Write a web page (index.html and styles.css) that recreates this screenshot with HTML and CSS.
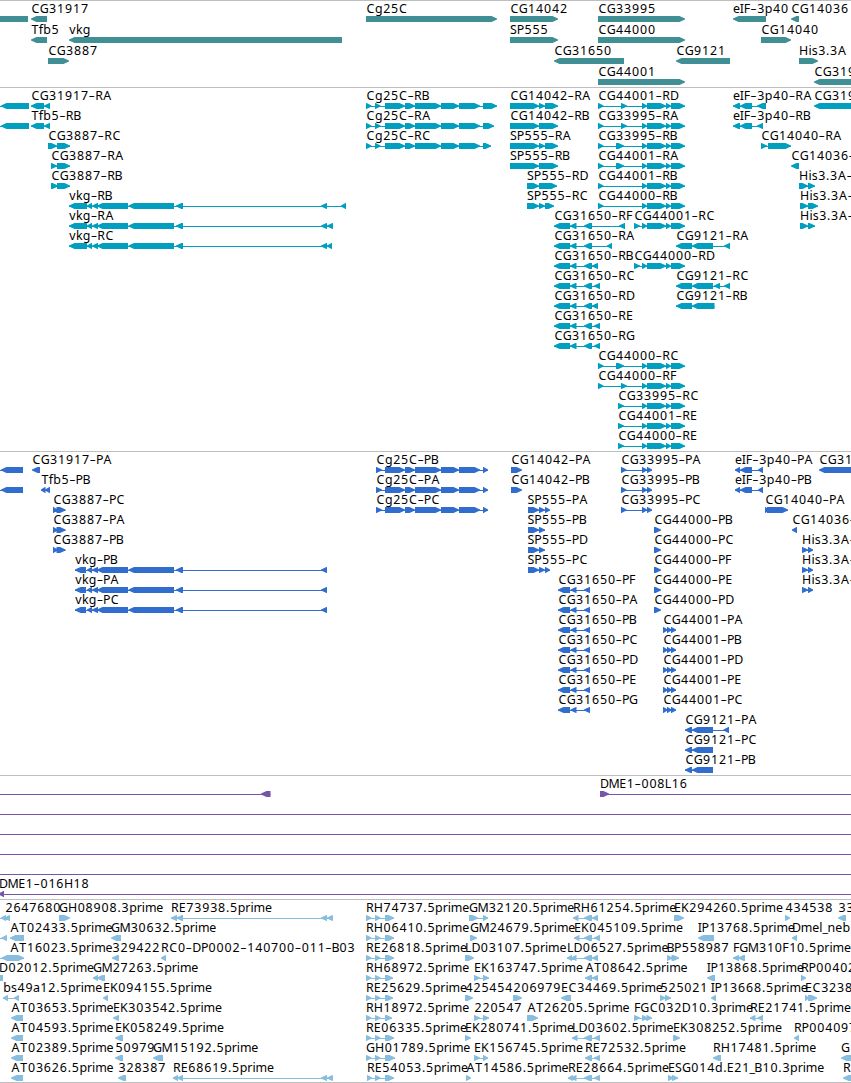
FILE: index.html
```html
<!DOCTYPE html>
<html lang="en">
<head>
<meta charset="utf-8">
<title>Genome tracks</title>
<link rel="stylesheet" href="styles.css">
</head>
<body>
<main class="browser" id="browser"></main>
<script src="tracks.js"></script>
</body>
</html>
```
FILE: styles.css
```css
* {
  box-sizing: border-box;
}

body {
  margin: 0;
  background: #fff;
  overflow: hidden;
}

.browser {
  display: flex;
  flex-direction: column;
  width: 851px;
  overflow: hidden;
  border-bottom: 1px solid #bebebe;
}

.track {
  display: flex;
  flex-direction: column;
  border-top: 1px solid #bebebe;
  padding-bottom: 3px;
}

.row {
  display: block;
  width: 851px;
  height: 20px;
  overflow: visible;
}

.genes .row {
  height: 21px;
}

.genes,
.ests {
  padding-bottom: 2px;
}

.genes { fill: #3f8f95; }
.transcripts { fill: #009fc0; }
.proteins { fill: #316dcd; }
.bacs { fill: #7457a8; }
.ests { fill: #87bddf; }

.label {
  font-family: "Noto Sans", "Open Sans", sans-serif;
  font-size: 12.4px;
  text-anchor: middle;
  fill: #000;
}

.dash {
  font-family: "Open Sans", "Noto Sans", sans-serif;
  font-size: 20px;
  font-weight: 300;
}
```
FILE: tracks.js
```js
// Each feature reads "label|x|direction|start,end start,end ...".
const cg = '375,380.5 385,405 405,415 415,441 441,459 459,480';
const cgP = '376,382 385,405 405,415 415,441 441,459 459,480 483,488';
const tail = '642,647 647,666 666,671 671,685';
const vk = '87,92 92,98 97,128 128.5,174 176,183';
const c3 = '554,570 570,576.5 584,592';
const c3P = '558,570 570.5,576.5 584,590';
const rh = '366,371.5 375,380.5 385,394';

const tracks = [
  { name: 'genes', rows: [
    '||<|-10,28;CG31917|31|<|31,47;Cg25C|366|>|366,497;CG14042|510|>|510,558;CG33995|598|>|598,685;eIF-3p40|733|<|733,766;CG14036|791|<|791,799',
    'Tfb5|31|<|31,47;vkg|69|<|69,342;SP555|510|>|510,558;CG44000|598|>|598,685;CG14040|761|>|761,791',
    'CG3887|48|>|48,69;CG31650|554|<|554,624;CG9121|676|<|676,730;His3.3A|799|>|799,818',
    'CG44001|598|>|598,685;CG319|814|<|814,880'
  ] },
  { name: 'transcripts', rows: [
    `||<|-20,-10 1,29;CG31917-RA|31|<|31,44 44,50;Cg25C-RB|366|>|366,371.5 ${cg} 483,497;CG14042-RA|510|>|510,539 539,545 545,558;CG44001-RD|598|>|598,603.5 621,627 ${tail};eIF-3p40-RA|733|<|733,740 740,752 757,766;CG319|814|<|814,880`,
    `||<|-20,-10 1,29;Tfb5-RB|31|<|31,44 44,50;Cg25C-RA|366|>|366,371.5 ${cg} 483,494;CG14042-RB|510|>|510,539 539,558;CG33995-RA|598|>|598,603.5 621,627 ${tail};eIF-3p40-RB|733|<|733,740 740,752 757,763`,
    `CG3887-RC|48|>|48,57 57,70;Cg25C-RC|366|>|366,371.5 ${cg} 483,491;SP555-RA|510|>|510,539 539,545 545,558;CG33995-RB|598|>|598,603.5 616,624 ${tail};CG14040-RA|761|>|761,767 768,791`,
    `CG3887-RA|51|>|51,57 57,70;SP555-RB|510|>|510,539 539,558;CG44001-RA|598|>|598,603.5 616,624 ${tail};CG14036-|791|<|791,799`,
    `CG3887-RB|51|>|51,55 52,58 57,70;SP555-RD|527|>|527,539 539,557;CG44001-RB|598|>|598,603.5 ${tail};His3.3A-|799|>|799,808 808,815`,
    `vkg-RB|69|<|69,87 ${vk} 321,327 341,346;SP555-RC|527|>|527,539 539,545 545,554;CG44000-RB|598|>|598,603.5 ${tail};His3.3A-|800|>|800,808 808,818`,
    `vkg-RA|69|<|69,87 ${vk} 321,327 327,333;CG31650-RF|554|<|${c3} 619,625;CG44001-RC|634|>|634,640 ${tail};His3.3A-|800|>|800,808 808,815`,
    `vkg-RC|69|<|69,87 ${vk} 321,327 327,332;CG31650-RA|554|<|${c3} 607,612;CG9121-RA|676|<|676,692 692,713 724,730`,
    `CG31650-RB|554|<|${c3} 592,598;CG44000-RD|634|>|634,640 ${tail}`,
    `CG31650-RC|554|<|${c3} 594,600;CG9121-RC|676|<|676,692 692,713 714,720 724,730`,
    `CG31650-RD|554|<|${c3} 592,598;CG9121-RB|676|<|676,692 692,714.5`,
    `CG31650-RE|554|<|${c3} 594,600`,
    `CG31650-RG|554|<|${c3} 594,600`,
    `CG44000-RC|598|>|598,603.5 616,624 ${tail}`,
    `CG44000-RF|598|>|598,603.5 621,627 ${tail}`,
    `CG33995-RC|618|>|618,624 ${tail}`,
    `CG44001-RE|618|>|618,624 ${tail}`,
    `CG44000-RE|618|>|618,624 ${tail}`
  ] },
  { name: 'proteins', rows: [
    `||<|-20,-10 1,23;CG31917-PA|32|<|32,40;Cg25C-PB|376|>|${cgP};CG14042-PA|511|>|511,522;CG33995-PA|621|>|621,626.5 642,647 647,652;eIF-3p40-PA|735|<|735,740 740,752 758,763;CG31|819|<|819,880`,
    `||<|-20,-10 1,23;Tfb5-PB|41|<|41,45.5 45,50;Cg25C-PA|376|>|${cgP};CG14042-PB|511|>|511,522;CG33995-PB|621|>|621,626.5 642,647 647,652;eIF-3p40-PB|735|<|735,740 740,752 758,763`,
    `CG3887-PC|53|>|53,57.5 56.5,65.5;Cg25C-PC|376|>|${cgP};SP555-PA|527.5|>|528,539 539,545 545,550;CG33995-PC|621|>|621,626.5 642,647 647,652;CG14040-PA|765|>|765,769 767,788`,
    `CG3887-PA|53|>|53,57.5 56.5,65.5;SP555-PB|527.5|>|528,539 539,545;CG44000-PB|654|>|654,661;CG14036-|792|<|792,797`,
    `CG3887-PB|53|>|53,57.5 56.5,65.5;SP555-PD|527.5|>|528,539 539,545;CG44000-PC|654|>|654,661;His3.3A-|802|>|802,808 808,813`,
    `vkg-PB|75|<|75,86 ${vk} 321,327;SP555-PC|527.5|>|528,539 539,545 545,550;CG44000-PF|654|>|654,661;His3.3A-|802|>|802,808 808,813`,
    `vkg-PA|75|<|75,86 ${vk} 321,327;CG31650-PF|558|<|${c3P};CG44000-PE|654|>|654,661;His3.3A-|802|>|802,808 808,813`,
    `vkg-PC|75|<|75,86 ${vk} 321,327;CG31650-PA|558|<|${c3P};CG44000-PD|654|>|654,661`,
    `CG31650-PB|558|<|${c3P};CG44001-PA|663|>|663,667.5 667,671.5 671,676`,
    `CG31650-PC|558|<|${c3P};CG44001-PB|663|>|663,667.5 667,671.5 671,676`,
    `CG31650-PD|558|<|${c3P};CG44001-PD|663|>|663,667.5 667,671.5 671,676`,
    `CG31650-PE|558|<|${c3P};CG44001-PE|663|>|663,667.5 667,671.5 671,676`,
    `CG31650-PG|558|<|${c3P};CG44001-PC|663|>|663,667.5 667,671.5 671,676`,
    'CG9121-PA|685|<|685,692 692,713 723.5,729',
    'CG9121-PC|685|<|685,692 692,713',
    'CG9121-PB|685|<|685,692 692,713'
  ] },
  { name: 'bacs', rows: [
    '||<|-20,-10 261,270.5;DME1-008L16|600|>|600,609 870,880',
    '||-|-10,870',
    '||-|-10,870',
    '||-|-10,870',
    '||-|-10,870',
    'DME1-016H18|-1|<|-1.5,4 870,880'
  ] },
  { name: 'ests', rows: [
    `2647680|5|<|-20,-10 1,6 4.5,10;GH08908.3prime|59|>|59,70;RE73938.5prime|171|<|171,177 176.5,183 321,327 327,333;RH74737.5prime|366|>|${rh};GM32120.5prime|469|>|469,478 483,488;RH61254.5prime|573|<|573,578.5 584,592 592,598;EK294260.5prime|674|>|674,684;434538|785|>|785,790;33|838|<|838,846`,
    `||<|-20,-10 1.5,7;AT02433.5prime|10|<|10,24;GM30632.5prime|111|<|111,121;RH06410.5prime|366|>|${rh};GM24679.5prime|470|>|470,477;EK045109.5prime|574|<|574,579.5 584,592 594,600;IP13768.5prime|698|<|698,714;Dmel_neb|792|<|792,797`,
    `||<|-20,-10 1.5,14;AT16023.5prime|10|>|13,19 14,24;329422|112|<|112,119;RC0-DP0002-140700-011-B03|161|<|161,166;RE26818.5prime|366|>|${rh};LD03107.5prime|465|>|465,474;LD06527.5prime|567|<|567,572 571,576.5 584,592 592,598;BP558987|667|>|667,672.5 671.5,679;FGM310F10.5prime|733|<|733,739 738,745`,
    `D02012.5prime|-1|<|-10,3;GM27263.5prime|93|<|93,98 97,105;RH68972.5prime|366|>|366,371.5 375,380.5 385,393;EK163747.5prime|474|>|474,480 483,489;AT08642.5prime|585|<|585,592 592,598;IP13868.5prime|707|<|707,715;RP00402|801|>|801,806`,
    `bs49a12.5prime|3|<|3,8 14,19;EK094155.5prime|103|<|103,108;RE25629.5prime|366|>|366,371.5 375,380.5 385,393;425454|465|>|465,473;206979|513|>|513,522;EC34469.5prime|561|<|561,571;525021|660|>|660,665.5 665,671;IP13668.5prime|711|<|711,716;EC3238|805|>|805,809 808,817`,
    `AT03653.5prime|11|<|11,23;EK303542.5prime|113|<|113,119;RH18972.5prime|366|>|366,371.5 375,380.5 385,392;220547|474|>|474,480 483,489;AT26205.5prime|527|>|527,538;FGC032D10.3prime|634|>|634,640 642,647.5 646.5,652;RE21741.5prime|750|<|750,755.5 757.5,763`,
    `AT04593.5prime|11|<|11,23;EK058249.5prime|115|<|115,123;RE06335.5prime|366|>|${rh};EK280741.5prime|465|>|465,471;LD03602.5prime|572|<|572,577.5 584,592 594,600;EK308252.5prime|673|>|673,680;RP004097|794|<|794,799`,
    `AT02389.5prime|11|<|11,23;50979|115|<|115,123;GM15192.5prime|153|<|153,163;GH01789.5prime|366|>|366,371.5 375,380.5 385,395;EK156745.5prime|474|>|474,480 483,488;RE72532.5prime|585|<|585,592 594,600;RH17481.5prime|713|<|713,721;G|841|<|841,880`,
    `AT03626.5prime|11|<|11,23;328387|118|<|118,126;RE68619.5prime|173|<|173,178 177,183 321,327 327,333;RE54053.5prime|367|>|367,372 375,380.5 385,394;AT14586.5prime|466|>|466,471;RE28664.5prime|568|<|568,573 571,576.5 584,592 594,600;ESG014d.E21_B10.3prime|668|>|668,673.5 672,678;R|843|<|843,880`
  ] }
];

// Horizontal advance of each label character, in pixels.
const advances = {
  A: 8.7, B: 7.3, C: 8.7, D: 9, E: 7, F: 6.3, G: 8.9, H: 9.3, I: 3.7, K: 7.8, L: 6.4,
  M: 10.3, P: 7, R: 7.8, S: 7, T: 7.8, a: 7, b: 8, d: 8, e: 7, f: 4.3, g: 8,
  i: 3.4, k: 6.5, l: 3.5, m: 11.2, n: 7.5, p: 7.9, r: 4.8, s: 6, v: 7,
  '.': 4, '-': 6.7, _: 5
};

function label(text, x) {
  const xs = [];
  const dys = [];
  let shifted = 0;
  let pen = x;
  for (const ch of text) {
    const width = advances[ch] || 7.97;
    const shift = ch === '-' ? 2 : 0;
    xs.push((pen + width / 2).toFixed(2));
    dys.push((shift - shifted).toFixed(1));
    shifted = shift;
    pen += width;
  }
  const body = text.replace(/-/g, '<tspan class="dash">-</tspan>');
  return `<text class="label" y="12" x="${xs.join(' ')}" dy="${dys.join(' ')}">${body}</text>`;
}

function arrow(a, b, dir) {
  const head = Math.min(6, b - a);
  return dir === '>'
    ? `M${a} 15H${b - head + 0.5}L${b} 17.5V18.5L${b - head + 0.5} 21H${a}Z`
    : `M${b} 15H${a + head - 0.5}L${a} 17.5V18.5L${a + head - 0.5} 21H${b}Z`;
}

function feature(spec) {
  const [text, x, dir, list] = spec.split('|');
  const blocks = list.split(' ').map(pair => pair.split(',').map(Number));
  const start = blocks[0][0];
  const end = blocks[blocks.length - 1][1];
  let out = '';
  if (blocks.length > 1 || dir === '-') {
    out += `<rect x="${start}" y="18" width="${end - start}" height="1"/>`;
  }
  if (dir !== '-') {
    out += `<path d="${blocks.map(([a, b]) => arrow(a, b, dir)).join('')}"/>`;
  }
  return out + (text ? label(text, Number(x)) : '');
}

document.getElementById('browser').innerHTML = tracks.map(track =>
  `<section class="track ${track.name}">${track.rows.map(row =>
    `<svg class="row">${row.split(';').map(feature).join('')}</svg>`).join('')}</section>`
).join('');
```
